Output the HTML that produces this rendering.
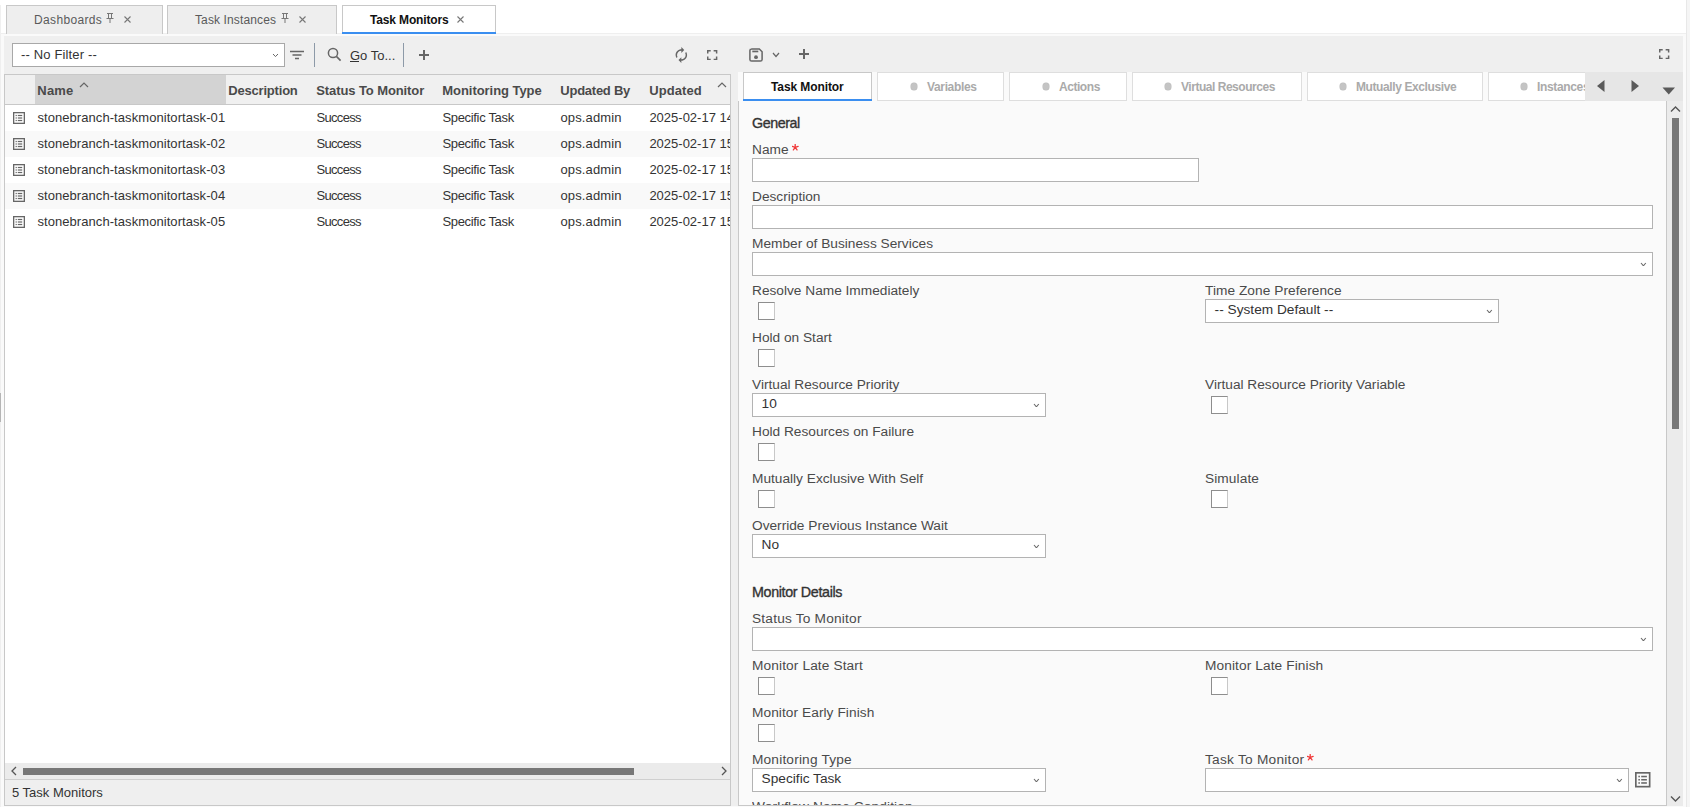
<!DOCTYPE html>
<html><head><meta charset="utf-8"><style>
*{box-sizing:border-box;margin:0;padding:0}
html,body{width:1690px;height:807px;overflow:hidden;background:#fff;font-family:"Liberation Sans",sans-serif;color:#333}
.a{position:absolute;display:block}
.t{position:absolute;white-space:nowrap;line-height:1}
</style></head><body>
<div class="a" style="left:0px;top:33px;width:1690px;height:1px;background:#efefef;"></div>
<div class="a" style="left:6px;top:5px;width:157px;height:29px;background:#eeeeee;border:1px solid #c8c8c8;border-bottom:none"></div>
<div class="t" style="left:34px;top:13.84px;font-size:12px;color:#5a5a5a;letter-spacing:0.35px;">Dashboards</div>
<div class="a" style="left:167px;top:5px;width:170px;height:29px;background:#eeeeee;border:1px solid #c8c8c8;border-bottom:none"></div>
<div class="t" style="left:195px;top:13.84px;font-size:12px;color:#5a5a5a;letter-spacing:0.12px;">Task Instances</div>
<div class="a" style="left:342px;top:5px;width:154px;height:29px;background:#fff;border:1px solid #c8c8c8;border-bottom:none"></div>
<div class="a" style="left:342px;top:32px;width:154px;height:2px;background:#3a8ef0;"></div>
<div class="t" style="left:370px;top:13.84px;font-size:12px;color:#111;font-weight:700;letter-spacing:-0.15px;">Task Monitors</div>
<svg class="a" style="left:106px;top:13px;" width="8" height="10" viewBox="0 0 8 10"><path d="M1 0.5 H7 M2.5 0.5 V5 M5.5 0.5 V5 M0.5 5.5 H7.5 M4 5.5 V10" fill="none" stroke="#777" stroke-width="1"/></svg>
<svg class="a" style="left:124px;top:16px;" width="7" height="7" viewBox="0 0 7 7"><path d="M0.5 0.5 L6.5 6.5 M6.5 0.5 L0.5 6.5" fill="none" stroke="#777" stroke-width="1.1"/></svg>
<svg class="a" style="left:281px;top:13px;" width="8" height="10" viewBox="0 0 8 10"><path d="M1 0.5 H7 M2.5 0.5 V5 M5.5 0.5 V5 M0.5 5.5 H7.5 M4 5.5 V10" fill="none" stroke="#777" stroke-width="1"/></svg>
<svg class="a" style="left:299px;top:16px;" width="7" height="7" viewBox="0 0 7 7"><path d="M0.5 0.5 L6.5 6.5 M6.5 0.5 L0.5 6.5" fill="none" stroke="#777" stroke-width="1.1"/></svg>
<svg class="a" style="left:457px;top:16px;" width="7" height="7" viewBox="0 0 7 7"><path d="M0.5 0.5 L6.5 6.5 M6.5 0.5 L0.5 6.5" fill="none" stroke="#777" stroke-width="1.1"/></svg>
<div class="a" style="left:0px;top:34px;width:1690px;height:2px;background:#fafafa;"></div>
<div class="a" style="left:0px;top:34px;width:1px;height:773px;background:#efefef;"></div>
<div class="a" style="left:1px;top:34px;width:3px;height:773px;background:#fafafa;"></div>
<div class="a" style="left:0px;top:5px;width:1px;height:29px;background:#f0f0f0;"></div>
<div class="a" style="left:0px;top:393px;width:1px;height:29px;background:#b5b5b5;"></div>
<div class="a" style="left:1683px;top:34px;width:3px;height:773px;background:#fafafa;"></div>
<div class="a" style="left:1686px;top:0px;width:1px;height:807px;background:#e8e8e8;"></div>
<div class="a" style="left:1687px;top:0px;width:3px;height:807px;background:#f5f5f5;"></div>
<div class="a" style="left:731px;top:36px;width:7px;height:771px;background:#efefef;"></div>
<div class="a" style="left:4px;top:806px;width:1682px;height:1px;background:#fafafa;"></div>
<div class="a" style="left:4px;top:36px;width:727px;height:38px;background:#efefef;"></div>
<div class="a" style="left:12px;top:43px;width:273px;height:24px;background:#fff;border:1px solid #a8a8a8;"></div>
<div class="t" style="left:21px;top:48.00px;font-size:13px;color:#333;letter-spacing:0.15px;">-- No Filter --</div>
<svg class="a" style="left:272px;top:53px;" width="7" height="4.6" viewBox="0 0 7 4.6"><path d="M1 1 L3.5 3.6 L6 1" fill="none" stroke="#666" stroke-width="1.0"/></svg>
<svg class="a" style="left:289px;top:50px;" width="16" height="10" viewBox="0 0 16 10"><path d="M1 1.5 H15 M3.5 5 H12.5 M6 8.5 H10" fill="none" stroke="#666" stroke-width="1.5"/></svg>
<div class="a" style="left:314px;top:43px;width:1px;height:24px;background:#8d9aa8;"></div>
<svg class="a" style="left:327px;top:47px;" width="15" height="15" viewBox="0 0 15 15"><circle cx="6" cy="6" r="4.6" fill="none" stroke="#666" stroke-width="1.5"/><path d="M9.4 9.4 L13.6 13.6" stroke="#666" stroke-width="1.6"/></svg>
<div class="t" style="left:350px;top:49.00px;font-size:13px;color:#333;">Go To...</div>
<div class="a" style="left:350px;top:61px;width:9px;height:1px;background:#333;"></div>
<div class="a" style="left:403px;top:43px;width:1px;height:24px;background:#8d9aa8;"></div>
<svg class="a" style="left:418px;top:49px;" width="12" height="12" viewBox="0 0 12 12"><path d="M6 1 V11 M1 6 H11" stroke="#666" stroke-width="2"/></svg>
<svg class="a" style="left:672px;top:46px;" width="18" height="18" viewBox="0 0 18 18"><g transform="translate(0.7 0.4) scale(0.72)"><path d="M12 6v3l4-4-4-4v3c-4.42 0-8 3.58-8 8 0 1.57.46 3.03 1.24 4.26L6.7 14.8c-.45-.83-.7-1.79-.7-2.8 0-3.31 2.69-6 6-6zm6.76 1.74L17.3 9.2c.44.84.7 1.79.7 2.8 0 3.31-2.69 6-6 6v-3l-4 4 4 4v-3c4.42 0 8-3.58 8-8 0-1.57-.46-3.03-1.24-4.26z" fill="#666"/></g></svg>
<svg class="a" style="left:703px;top:46px;" width="18" height="18" viewBox="0 0 18 18"><g transform="translate(0.30 0.40) scale(0.74 0.72)"><path d="M7 14H5v5h5v-2H7v-3zm-2-4h2V7h3V5H5v5zm12 7h-3v2h5v-5h-2v3zM14 5v2h3v3h2V5h-5z" fill="#666"/></g></svg>
<div class="a" style="left:4px;top:74px;width:727px;height:706px;background:#fff;border:1px solid #c8c8c8;border-bottom:none"></div>
<div class="a" style="left:5px;top:75px;width:725px;height:29px;background:#f0f0f0;"></div>
<div class="a" style="left:5px;top:104px;width:725px;height:1px;background:#c8c8c8;"></div>
<div class="a" style="left:35px;top:75px;width:191px;height:29px;background:#d3d3d3;"></div>
<div class="t" style="left:37.3px;top:84.00px;font-size:13px;color:#4a4a4a;font-weight:700;letter-spacing:0.2px;">Name</div>
<svg class="a" style="left:79px;top:82px;" width="10" height="6" viewBox="0 0 10 6"><path d="M1 5 L5 1 L9 5" fill="none" stroke="#666" stroke-width="1.2"/></svg>
<div class="t" style="left:228.3px;top:84.00px;font-size:13px;color:#4a4a4a;font-weight:700;letter-spacing:-0.2px;">Description</div>
<div class="t" style="left:316.3px;top:84.00px;font-size:13px;color:#4a4a4a;font-weight:700;letter-spacing:-0.1px;">Status To Monitor</div>
<div class="t" style="left:442.3px;top:84.00px;font-size:13px;color:#4a4a4a;font-weight:700;letter-spacing:-0.05px;">Monitoring Type</div>
<div class="t" style="left:560.3px;top:84.00px;font-size:13px;color:#4a4a4a;font-weight:700;letter-spacing:-0.25px;">Updated By</div>
<div class="t" style="left:649.3px;top:84.00px;font-size:13px;color:#4a4a4a;font-weight:700;letter-spacing:0.05px;">Updated</div>
<svg class="a" style="left:717px;top:82px;" width="10" height="6" viewBox="0 0 10 6"><path d="M1 5 L5 1 L9 5" fill="none" stroke="#666" stroke-width="1.2"/></svg>
<div class="a" style="left:5px;top:105px;width:725px;height:26px;background:#fff;"></div>
<svg class="a" style="left:13px;top:112px;" width="12" height="12" viewBox="0 0 12 12"><g transform="scale(1.0)"><rect x="0.65" y="0.65" width="10.7" height="10.7" fill="none" stroke="#666" stroke-width="1.3"/><rect x="2.6" y="2.9" width="1.2" height="1.2" fill="#666"/><rect x="4.8" y="2.9" width="4.4" height="1.2" fill="#666"/><rect x="2.6" y="5.4" width="1.2" height="1.2" fill="#666"/><rect x="4.8" y="5.4" width="4.4" height="1.2" fill="#666"/><rect x="2.6" y="7.9" width="1.2" height="1.2" fill="#666"/><rect x="4.8" y="7.9" width="4.4" height="1.2" fill="#666"/></g></svg>
<div class="t" style="left:37.4px;top:111.00px;font-size:13px;color:#333;letter-spacing:0.07px;">stonebranch-taskmonitortask-01</div>
<div class="t" style="left:316.4px;top:111.00px;font-size:13px;color:#333;letter-spacing:-0.65px;">Success</div>
<div class="t" style="left:442.4px;top:111.00px;font-size:13px;color:#333;letter-spacing:-0.32px;">Specific Task</div>
<div class="t" style="left:560.4px;top:111.00px;font-size:13px;color:#333;letter-spacing:0.15px;">ops.admin</div>
<div class="t" style="left:649.4px;top:111.00px;font-size:13px;color:#333;width:80.6px;overflow:hidden">2025-02-17 14</div>
<div class="a" style="left:5px;top:131px;width:725px;height:26px;background:#f9f9f9;"></div>
<svg class="a" style="left:13px;top:138px;" width="12" height="12" viewBox="0 0 12 12"><g transform="scale(1.0)"><rect x="0.65" y="0.65" width="10.7" height="10.7" fill="none" stroke="#666" stroke-width="1.3"/><rect x="2.6" y="2.9" width="1.2" height="1.2" fill="#666"/><rect x="4.8" y="2.9" width="4.4" height="1.2" fill="#666"/><rect x="2.6" y="5.4" width="1.2" height="1.2" fill="#666"/><rect x="4.8" y="5.4" width="4.4" height="1.2" fill="#666"/><rect x="2.6" y="7.9" width="1.2" height="1.2" fill="#666"/><rect x="4.8" y="7.9" width="4.4" height="1.2" fill="#666"/></g></svg>
<div class="t" style="left:37.4px;top:137.00px;font-size:13px;color:#333;letter-spacing:0.07px;">stonebranch-taskmonitortask-02</div>
<div class="t" style="left:316.4px;top:137.00px;font-size:13px;color:#333;letter-spacing:-0.65px;">Success</div>
<div class="t" style="left:442.4px;top:137.00px;font-size:13px;color:#333;letter-spacing:-0.32px;">Specific Task</div>
<div class="t" style="left:560.4px;top:137.00px;font-size:13px;color:#333;letter-spacing:0.15px;">ops.admin</div>
<div class="t" style="left:649.4px;top:137.00px;font-size:13px;color:#333;width:80.6px;overflow:hidden">2025-02-17 15</div>
<div class="a" style="left:5px;top:157px;width:725px;height:26px;background:#fff;"></div>
<svg class="a" style="left:13px;top:164px;" width="12" height="12" viewBox="0 0 12 12"><g transform="scale(1.0)"><rect x="0.65" y="0.65" width="10.7" height="10.7" fill="none" stroke="#666" stroke-width="1.3"/><rect x="2.6" y="2.9" width="1.2" height="1.2" fill="#666"/><rect x="4.8" y="2.9" width="4.4" height="1.2" fill="#666"/><rect x="2.6" y="5.4" width="1.2" height="1.2" fill="#666"/><rect x="4.8" y="5.4" width="4.4" height="1.2" fill="#666"/><rect x="2.6" y="7.9" width="1.2" height="1.2" fill="#666"/><rect x="4.8" y="7.9" width="4.4" height="1.2" fill="#666"/></g></svg>
<div class="t" style="left:37.4px;top:163.00px;font-size:13px;color:#333;letter-spacing:0.07px;">stonebranch-taskmonitortask-03</div>
<div class="t" style="left:316.4px;top:163.00px;font-size:13px;color:#333;letter-spacing:-0.65px;">Success</div>
<div class="t" style="left:442.4px;top:163.00px;font-size:13px;color:#333;letter-spacing:-0.32px;">Specific Task</div>
<div class="t" style="left:560.4px;top:163.00px;font-size:13px;color:#333;letter-spacing:0.15px;">ops.admin</div>
<div class="t" style="left:649.4px;top:163.00px;font-size:13px;color:#333;width:80.6px;overflow:hidden">2025-02-17 15</div>
<div class="a" style="left:5px;top:183px;width:725px;height:26px;background:#f9f9f9;"></div>
<svg class="a" style="left:13px;top:190px;" width="12" height="12" viewBox="0 0 12 12"><g transform="scale(1.0)"><rect x="0.65" y="0.65" width="10.7" height="10.7" fill="none" stroke="#666" stroke-width="1.3"/><rect x="2.6" y="2.9" width="1.2" height="1.2" fill="#666"/><rect x="4.8" y="2.9" width="4.4" height="1.2" fill="#666"/><rect x="2.6" y="5.4" width="1.2" height="1.2" fill="#666"/><rect x="4.8" y="5.4" width="4.4" height="1.2" fill="#666"/><rect x="2.6" y="7.9" width="1.2" height="1.2" fill="#666"/><rect x="4.8" y="7.9" width="4.4" height="1.2" fill="#666"/></g></svg>
<div class="t" style="left:37.4px;top:189.00px;font-size:13px;color:#333;letter-spacing:0.07px;">stonebranch-taskmonitortask-04</div>
<div class="t" style="left:316.4px;top:189.00px;font-size:13px;color:#333;letter-spacing:-0.65px;">Success</div>
<div class="t" style="left:442.4px;top:189.00px;font-size:13px;color:#333;letter-spacing:-0.32px;">Specific Task</div>
<div class="t" style="left:560.4px;top:189.00px;font-size:13px;color:#333;letter-spacing:0.15px;">ops.admin</div>
<div class="t" style="left:649.4px;top:189.00px;font-size:13px;color:#333;width:80.6px;overflow:hidden">2025-02-17 15</div>
<div class="a" style="left:5px;top:209px;width:725px;height:26px;background:#fff;"></div>
<svg class="a" style="left:13px;top:216px;" width="12" height="12" viewBox="0 0 12 12"><g transform="scale(1.0)"><rect x="0.65" y="0.65" width="10.7" height="10.7" fill="none" stroke="#666" stroke-width="1.3"/><rect x="2.6" y="2.9" width="1.2" height="1.2" fill="#666"/><rect x="4.8" y="2.9" width="4.4" height="1.2" fill="#666"/><rect x="2.6" y="5.4" width="1.2" height="1.2" fill="#666"/><rect x="4.8" y="5.4" width="4.4" height="1.2" fill="#666"/><rect x="2.6" y="7.9" width="1.2" height="1.2" fill="#666"/><rect x="4.8" y="7.9" width="4.4" height="1.2" fill="#666"/></g></svg>
<div class="t" style="left:37.4px;top:215.00px;font-size:13px;color:#333;letter-spacing:0.07px;">stonebranch-taskmonitortask-05</div>
<div class="t" style="left:316.4px;top:215.00px;font-size:13px;color:#333;letter-spacing:-0.65px;">Success</div>
<div class="t" style="left:442.4px;top:215.00px;font-size:13px;color:#333;letter-spacing:-0.32px;">Specific Task</div>
<div class="t" style="left:560.4px;top:215.00px;font-size:13px;color:#333;letter-spacing:0.15px;">ops.admin</div>
<div class="t" style="left:649.4px;top:215.00px;font-size:13px;color:#333;width:80.6px;overflow:hidden">2025-02-17 15</div>
<div class="a" style="left:5px;top:763px;width:725px;height:16px;background:#ebebeb;"></div>
<div class="a" style="left:5px;top:779px;width:725px;height:1px;background:#cfcfcf;"></div>
<svg class="a" style="left:10px;top:766px;" width="8" height="10" viewBox="0 0 8 10"><path d="M6 1 L2 5 L6 9" fill="none" stroke="#555" stroke-width="1.3"/></svg>
<div class="a" style="left:23px;top:768px;width:611px;height:7px;background:#777;"></div>
<svg class="a" style="left:720px;top:766px;" width="8" height="10" viewBox="0 0 8 10"><path d="M2 1 L6 5 L2 9" fill="none" stroke="#555" stroke-width="1.3"/></svg>
<div class="a" style="left:4px;top:780px;width:727px;height:26px;background:#efefef;border:1px solid #c8c8c8;border-top:none"></div>
<div class="t" style="left:12px;top:786.00px;font-size:13px;color:#333;">5 Task Monitors</div>
<div class="a" style="left:738px;top:36px;width:945px;height:36px;background:#efefef;"></div>
<svg class="a" style="left:748px;top:47px;" width="16" height="16" viewBox="0 0 16 16"><path d="M3.2 1.9 H11.3 L14.1 4.7 V12.4 Q14.1 14.1 12.4 14.1 H3.6 Q1.9 14.1 1.9 12.4 V3.6 Q1.9 1.9 3.6 1.9 Z" fill="none" stroke="#666" stroke-width="1.5"/><rect x="4.3" y="3.6" width="6" height="1.7" fill="#666"/><circle cx="8" cy="10.2" r="1.9" fill="#666"/></svg>
<svg class="a" style="left:772px;top:52px;" width="8" height="5.5" viewBox="0 0 8 5.5"><path d="M1 1 L4.0 4.5 L7 1" fill="none" stroke="#666" stroke-width="1.2"/></svg>
<svg class="a" style="left:798px;top:48px;" width="12" height="12" viewBox="0 0 12 12"><path d="M6 1 V11 M1 6 H11" stroke="#666" stroke-width="2"/></svg>
<svg class="a" style="left:1655px;top:45px;" width="18" height="18" viewBox="0 0 18 18"><g transform="translate(0.30 0.40) scale(0.74 0.72)"><path d="M7 14H5v5h5v-2H7v-3zm-2-4h2V7h3V5H5v5zm12 7h-3v2h5v-5h-2v3zM14 5v2h3v3h2V5h-5z" fill="#666"/></g></svg>
<div class="a" style="left:738px;top:72px;width:945px;height:29px;background:#fafafa;"></div>
<div class="a" style="left:743px;top:72px;width:129px;height:29px;background:#fff;border:1px solid #c8c8c8;border-bottom:none"></div>
<div class="a" style="left:743px;top:99px;width:129px;height:2px;background:#3a8ef0;"></div>
<div class="t" style="left:771px;top:80.84px;font-size:12px;color:#111;font-weight:700;letter-spacing:-0.1px;">Task Monitor</div>
<div class="a" style="left:877px;top:72px;width:127px;height:29px;background:#fff;border:1px solid #dedede"></div>
<div class="a" style="left:910.5px;top:83px;width:6.5px;height:6.5px;border-radius:50%;background:#c4c4c4;box-shadow:0 0 0 0.5px #bbb"></div>
<div class="t" style="left:927px;top:80.84px;font-size:12px;color:#aaaaaa;font-weight:700;letter-spacing:-0.35px;">Variables</div>
<div class="a" style="left:1009px;top:72px;width:118px;height:29px;background:#fff;border:1px solid #dedede"></div>
<div class="a" style="left:1042.5px;top:83px;width:6.5px;height:6.5px;border-radius:50%;background:#c4c4c4;box-shadow:0 0 0 0.5px #bbb"></div>
<div class="t" style="left:1059px;top:80.84px;font-size:12px;color:#aaaaaa;font-weight:700;letter-spacing:-0.45px;">Actions</div>
<div class="a" style="left:1132px;top:72px;width:170px;height:29px;background:#fff;border:1px solid #dedede"></div>
<div class="a" style="left:1164.5px;top:83px;width:6.5px;height:6.5px;border-radius:50%;background:#c4c4c4;box-shadow:0 0 0 0.5px #bbb"></div>
<div class="t" style="left:1181px;top:80.84px;font-size:12px;color:#aaaaaa;font-weight:700;letter-spacing:-0.47px;">Virtual Resources</div>
<div class="a" style="left:1307px;top:72px;width:176px;height:29px;background:#fff;border:1px solid #dedede"></div>
<div class="a" style="left:1339.5px;top:83px;width:6.5px;height:6.5px;border-radius:50%;background:#c4c4c4;box-shadow:0 0 0 0.5px #bbb"></div>
<div class="t" style="left:1356px;top:80.84px;font-size:12px;color:#aaaaaa;font-weight:700;letter-spacing:-0.4px;">Mutually Exclusive</div>
<div class="a" style="left:1488px;top:72px;width:120px;height:29px;background:#fff;border:1px solid #dedede"></div>
<div class="a" style="left:1520.5px;top:83px;width:6.5px;height:6.5px;border-radius:50%;background:#c4c4c4;box-shadow:0 0 0 0.5px #bbb"></div>
<div class="t" style="left:1537px;top:80.84px;font-size:12px;color:#aaaaaa;font-weight:700;letter-spacing:-0.35px;">Instances</div>
<div class="a" style="left:1585px;top:72px;width:98px;height:29px;background:#e6e6e6;"></div>
<svg class="a" style="left:1597px;top:80px;" width="8" height="12" viewBox="0 0 8 12"><path d="M7.5 0 V12 L0 6 Z" fill="#5a5a5a"/></svg>
<svg class="a" style="left:1631px;top:80px;" width="8" height="12" viewBox="0 0 8 12"><path d="M0.5 0 V12 L8 6 Z" fill="#5a5a5a"/></svg>
<svg class="a" style="left:1662px;top:87px;" width="14" height="8" viewBox="0 0 14 8"><path d="M0.5 0.5 H13 L6.75 7.5 Z" fill="#5a5a5a"/></svg>
<div class="a" style="left:738px;top:101px;width:945px;height:705px;background:#fafafa;border:1px solid #c8c8c8;border-top:none"></div>
<div class="t" style="left:752px;top:115.90px;font-size:14.3px;color:#333;letter-spacing:-0.45px;-webkit-text-stroke:0.35px #333">General</div>
<div class="t" style="left:752px;top:143.00px;font-size:13.7px;color:#4a4a4a;">Name</div>
<svg class="a" style="left:792px;top:143.5px;" width="7" height="7" viewBox="0 0 7 7"><path d="M3.20 3.40 L3.20 0.30 M3.20 3.40 L6.15 2.44 M3.20 3.40 L5.02 5.91 M3.20 3.40 L1.38 5.91 M3.20 3.40 L0.25 2.44 " stroke="#f03a3a" stroke-width="1.3" stroke-linecap="round" fill="none"/></svg>
<div class="a" style="left:752px;top:158px;width:447px;height:24px;background:#fff;border:1px solid #b3b3b3;"></div>
<div class="t" style="left:752px;top:190.00px;font-size:13.7px;color:#4a4a4a;">Description</div>
<div class="a" style="left:752px;top:205px;width:901px;height:24px;background:#fff;border:1px solid #b3b3b3;"></div>
<div class="t" style="left:752px;top:237.00px;font-size:13.7px;color:#4a4a4a;">Member of Business Services</div>
<div class="a" style="left:752px;top:252px;width:901px;height:24px;background:#fff;border:1px solid #b3b3b3;"></div>
<svg class="a" style="left:1640.4px;top:261.5px;" width="6.8" height="4.8" viewBox="0 0 6.8 4.8"><path d="M1 1 L3.4 3.8 L5.8 1" fill="none" stroke="#6a6a6a" stroke-width="1.1"/></svg>
<div class="t" style="left:752px;top:284.00px;font-size:13.7px;color:#4a4a4a;">Resolve Name Immediately</div>
<div class="a" style="left:758px;top:302px;width:17px;height:18px;background:#fff;border:1px solid #8e8e8e;border-right-color:#c8c8c8"></div>
<div class="t" style="left:1205px;top:284.00px;font-size:13.7px;color:#4a4a4a;letter-spacing:0.05px;">Time Zone Preference</div>
<div class="a" style="left:1205px;top:299px;width:294px;height:24px;background:#fff;border:1px solid #b3b3b3;"></div>
<svg class="a" style="left:1486.4px;top:308.5px;" width="6.8" height="4.8" viewBox="0 0 6.8 4.8"><path d="M1 1 L3.4 3.8 L5.8 1" fill="none" stroke="#6a6a6a" stroke-width="1.1"/></svg>
<div class="t" style="left:1214.6px;top:303.10px;font-size:13.7px;color:#333;">-- System Default --</div>
<div class="t" style="left:752px;top:331.00px;font-size:13.7px;color:#4a4a4a;">Hold on Start</div>
<div class="a" style="left:758px;top:349px;width:17px;height:18px;background:#fff;border:1px solid #8e8e8e;border-right-color:#c8c8c8"></div>
<div class="t" style="left:752px;top:378.00px;font-size:13.7px;color:#4a4a4a;">Virtual Resource Priority</div>
<div class="a" style="left:752px;top:393px;width:294px;height:24px;background:#fff;border:1px solid #b3b3b3;"></div>
<svg class="a" style="left:1033.4px;top:402.5px;" width="6.8" height="4.8" viewBox="0 0 6.8 4.8"><path d="M1 1 L3.4 3.8 L5.8 1" fill="none" stroke="#6a6a6a" stroke-width="1.1"/></svg>
<div class="t" style="left:761.6px;top:397.10px;font-size:13.7px;color:#333;">10</div>
<div class="t" style="left:1205px;top:378.00px;font-size:13.7px;color:#4a4a4a;">Virtual Resource Priority Variable</div>
<div class="a" style="left:1211px;top:396px;width:17px;height:18px;background:#fff;border:1px solid #8e8e8e;border-right-color:#c8c8c8"></div>
<div class="t" style="left:752px;top:425.00px;font-size:13.7px;color:#4a4a4a;">Hold Resources on Failure</div>
<div class="a" style="left:758px;top:443px;width:17px;height:18px;background:#fff;border:1px solid #8e8e8e;border-right-color:#c8c8c8"></div>
<div class="t" style="left:752px;top:472.00px;font-size:13.7px;color:#4a4a4a;">Mutually Exclusive With Self</div>
<div class="a" style="left:758px;top:490px;width:17px;height:18px;background:#fff;border:1px solid #8e8e8e;border-right-color:#c8c8c8"></div>
<div class="t" style="left:1205px;top:472.00px;font-size:13.7px;color:#4a4a4a;letter-spacing:0.1px;">Simulate</div>
<div class="a" style="left:1211px;top:490px;width:17px;height:18px;background:#fff;border:1px solid #8e8e8e;border-right-color:#c8c8c8"></div>
<div class="t" style="left:752px;top:519.00px;font-size:13.7px;color:#4a4a4a;">Override Previous Instance Wait</div>
<div class="a" style="left:752px;top:534px;width:294px;height:24px;background:#fff;border:1px solid #b3b3b3;"></div>
<svg class="a" style="left:1033.4px;top:543.5px;" width="6.8" height="4.8" viewBox="0 0 6.8 4.8"><path d="M1 1 L3.4 3.8 L5.8 1" fill="none" stroke="#6a6a6a" stroke-width="1.1"/></svg>
<div class="t" style="left:761.6px;top:538.10px;font-size:13.7px;color:#333;">No</div>
<div class="t" style="left:752px;top:584.90px;font-size:14.3px;color:#333;letter-spacing:-0.35px;-webkit-text-stroke:0.35px #333">Monitor Details</div>
<div class="t" style="left:752px;top:612.00px;font-size:13.7px;color:#4a4a4a;letter-spacing:0.2px;">Status To Monitor</div>
<div class="a" style="left:752px;top:627px;width:901px;height:24px;background:#fff;border:1px solid #b3b3b3;"></div>
<svg class="a" style="left:1640.4px;top:636.5px;" width="6.8" height="4.8" viewBox="0 0 6.8 4.8"><path d="M1 1 L3.4 3.8 L5.8 1" fill="none" stroke="#6a6a6a" stroke-width="1.1"/></svg>
<div class="t" style="left:752px;top:659.00px;font-size:13.7px;color:#4a4a4a;letter-spacing:0.12px;">Monitor Late Start</div>
<div class="a" style="left:758px;top:677px;width:17px;height:18px;background:#fff;border:1px solid #8e8e8e;border-right-color:#c8c8c8"></div>
<div class="t" style="left:1205px;top:659.00px;font-size:13.7px;color:#4a4a4a;letter-spacing:0.1px;">Monitor Late Finish</div>
<div class="a" style="left:1211px;top:677px;width:17px;height:18px;background:#fff;border:1px solid #8e8e8e;border-right-color:#c8c8c8"></div>
<div class="t" style="left:752px;top:706.00px;font-size:13.7px;color:#4a4a4a;letter-spacing:0.07px;">Monitor Early Finish</div>
<div class="a" style="left:758px;top:724px;width:17px;height:18px;background:#fff;border:1px solid #8e8e8e;border-right-color:#c8c8c8"></div>
<div class="t" style="left:752px;top:753.00px;font-size:13.7px;color:#4a4a4a;letter-spacing:0.18px;">Monitoring Type</div>
<div class="a" style="left:752px;top:768px;width:294px;height:24px;background:#fff;border:1px solid #b3b3b3;"></div>
<svg class="a" style="left:1033.4px;top:777.5px;" width="6.8" height="4.8" viewBox="0 0 6.8 4.8"><path d="M1 1 L3.4 3.8 L5.8 1" fill="none" stroke="#6a6a6a" stroke-width="1.1"/></svg>
<div class="t" style="left:761.6px;top:772.10px;font-size:13.7px;color:#333;">Specific Task</div>
<div class="t" style="left:1205px;top:753.00px;font-size:13.7px;color:#4a4a4a;letter-spacing:0.25px;">Task To Monitor</div>
<svg class="a" style="left:1307px;top:753.5px;" width="7" height="7" viewBox="0 0 7 7"><path d="M3.20 3.40 L3.20 0.30 M3.20 3.40 L6.15 2.44 M3.20 3.40 L5.02 5.91 M3.20 3.40 L1.38 5.91 M3.20 3.40 L0.25 2.44 " stroke="#f03a3a" stroke-width="1.3" stroke-linecap="round" fill="none"/></svg>
<div class="a" style="left:1205px;top:768px;width:424px;height:24px;background:#fff;border:1px solid #b3b3b3;"></div>
<svg class="a" style="left:1616.4px;top:777.5px;" width="6.8" height="4.8" viewBox="0 0 6.8 4.8"><path d="M1 1 L3.4 3.8 L5.8 1" fill="none" stroke="#6a6a6a" stroke-width="1.1"/></svg>
<svg class="a" style="left:1635px;top:772px;" width="15.5" height="15.5" viewBox="0 0 15.5 15.5"><g transform="scale(1.2916666666666667)"><rect x="0.65" y="0.65" width="10.7" height="10.7" fill="none" stroke="#666" stroke-width="1.3"/><rect x="2.6" y="2.9" width="1.2" height="1.2" fill="#666"/><rect x="4.8" y="2.9" width="4.4" height="1.2" fill="#666"/><rect x="2.6" y="5.4" width="1.2" height="1.2" fill="#666"/><rect x="4.8" y="5.4" width="4.4" height="1.2" fill="#666"/><rect x="2.6" y="7.9" width="1.2" height="1.2" fill="#666"/><rect x="4.8" y="7.9" width="4.4" height="1.2" fill="#666"/></g></svg>
<div class="t" style="left:752px;top:800.00px;font-size:13.7px;color:#4a4a4a;letter-spacing:0.12px;height:5px;overflow:hidden">Workflow Name Condition</div>
<div class="a" style="left:1666px;top:101px;width:17px;height:705px;background:#ebebeb;border-left:1px solid #c8c8c8"></div>
<svg class="a" style="left:1670px;top:105px;" width="11" height="8" viewBox="0 0 11 8"><path d="M1 6.5 L5.5 2 L10 6.5" fill="none" stroke="#555" stroke-width="1.4"/></svg>
<div class="a" style="left:1672px;top:118px;width:7px;height:311px;background:#777;"></div>
<svg class="a" style="left:1670px;top:795px;" width="11" height="8" viewBox="0 0 11 8"><path d="M1 1.5 L5.5 6 L10 1.5" fill="none" stroke="#555" stroke-width="1.4"/></svg>
</body></html>
